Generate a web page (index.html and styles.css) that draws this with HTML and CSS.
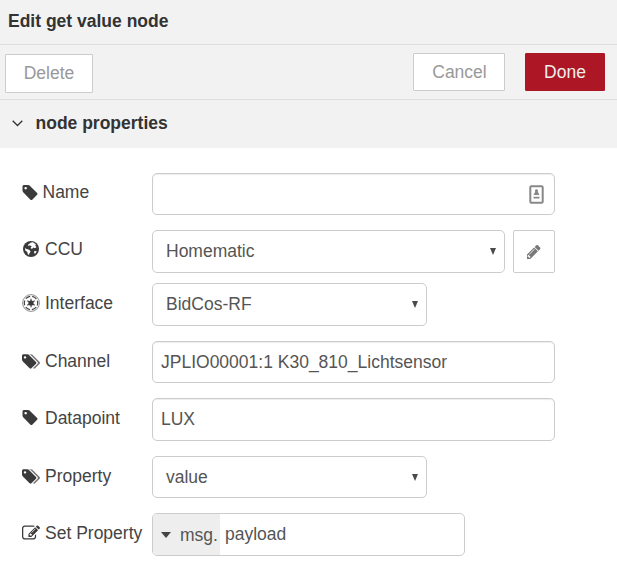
FILE: index.html
```html
<!DOCTYPE html>
<html lang="en">
<head>
<meta charset="utf-8">
<title>Edit get value node</title>
<link rel="stylesheet" href="styles.css">
</head>
<body>
<svg class="defs" width="0" height="0">
  <symbol id="tag" viewBox="128 128 1515 1515"><path d="M576 448q0-53-37.500-90.500t-90.500-37.500-90.500 37.500-37.500 90.500 37.500 90.500 90.500 37.500 90.500-37.500 37.500-90.500zm1067 576q0 53-37 90l-491 492q-39 37-91 37-53 0-90-37l-715-716q-38-37-64.500-101t-26.500-117v-416q0-52 38-90t90-38h416q53 0 117 26.500t102 64.500l715 714q37 39 37 91z"/></symbol>
  <symbol id="tags" viewBox="128 128 1899 1515"><path d="M576 448q0-53-37.500-90.500t-90.500-37.500-90.500 37.500-37.500 90.500 37.500 90.500 90.500 37.500 90.500-37.500 37.500-90.500zm1067 576q0 53-37 90l-491 492q-39 37-91 37-53 0-90-37l-715-716q-38-37-64.500-101t-26.500-117v-416q0-52 38-90t90-38h416q53 0 117 26.500t102 64.500l715 714q37 39 37 91z"/><path opacity=".7" d="M2027 1024q0 53-37 90l-491 492q-39 37-91 37-36 0-59-14t-53-45l470-470q37-37 37-90 0-52-37-91l-715-714q-38-38-102-64.500t-117-26.500h224q53 0 117 26.500t102 64.500l715 714q37 39 37 91z"/></symbol>
  <symbol id="pencil" viewBox="256 149 1387 1515"><path d="M491 1536l91-91-235-235-91 91v107h128v128h107zm523-928q0-22-22-22-10 0-17 7l-542 542q-7 7-7 17 0 22 22 22 10 0 17-7l542-542q7-7 7-17zm-54-192l416 416-832 832h-416v-416zm683 96q0 53-37 90l-166 166-416-416 166-165q36-38 90-38 53 0 91 38l235 234q37 39 37 91z"/></symbol>
  <symbol id="edit" viewBox="0 128 1792 1408"><path d="M888 1184l116-116-152-152-116 116v56h96v96h56zm440-720q-16-16-33 1l-350 350q-17 17-1 33t33-1l350-350q17-17 1-33zm80 594v190q0 119-84.500 203.500t-203.500 84.500h-832q-119 0-203.500-84.500t-84.500-203.500v-832q0-119 84.500-203.500t203.500-84.500h832q63 0 117 25 15 7 18 23 3 17-9 29l-49 49q-14 14-32 8-23-6-45-6h-832q-66 0-113 47t-47 113v832q0 66 47 113t113 47h832q66 0 113-47t47-113v-126q0-13 9-22l64-64q15-15 35-7t20 29zm-96-738l288 288-672 672h-288v-288zm444 132l-92 92-288-288 92-92q28-28 68-28t68 28l152 152q28 28 28 68t-28 68z"/></symbol>
  <symbol id="globe" viewBox="0 0 16 16"><circle cx="8" cy="8" r="8"/><path fill="#fff" d="M8 1.600 10 1.300 13 3.400 12.200 4.800 13.600 6 12 7.300 10.300 6.500 9 8 7.500 7 8.700 5.200 6.700 4.300 5.500 5.200 5 3.800ZM2 7 3.500 8 6.300 8.700 7.600 10.500 6.500 12.300 5.900 14 4.800 13.300 4.300 11 2.300 9.500ZM11 10.300 13.700 10 12.500 12.500 11.300 12.600Z"/></symbol>
  <symbol id="empire" viewBox="0 0 18 18"><g fill="none" stroke="#444"><circle cx="9" cy="9" r="8.400" stroke-width=".8" opacity=".75"/><circle cx="9" cy="9" r="6.700" stroke-width="1.200" stroke-dasharray="5 2.016" stroke-dashoffset="2.500"/><path stroke-width="1.200" d="M9 4.700v8.600M5.300 6.850l7.400 4.300M5.300 11.150l7.400-4.300"/></g><circle cx="9" cy="9" r="2.600"/></symbol>
</svg>
<header class="title">Edit get value node</header>
<div class="toolbar">
  <button class="btn delete">Delete</button>
  <button class="btn cancel">Cancel</button>
  <button class="btn done">Done</button>
</div>
<div class="section">
  <svg class="chevron" viewBox="0 0 11 7"><path d="M.7.8 5.500 5.500 10.300.8"/></svg>
  <span>node properties</span>
</div>
<main class="form">
  <div class="row short name-row">
    <label><svg class="icon tag"><use href="#tag"/></svg>Name</label>
    <div class="field wide input"><svg class="contact" viewBox="0 0 15 19"><rect x="1.300" y="1.300" width="12.400" height="16.400" rx="1"/><path d="M7.500 4.200a1.600 1.600 0 0 1 1.300 2.500L10.500 10h-6l1.700-3.300A1.600 1.600 0 0 1 7.500 4.200ZM4.500 11.700h6v1.800h-6Z"/></svg></div>
  </div>
  <div class="row ccu-row">
    <label><svg class="icon globe"><use href="#globe"/></svg>CCU</label>
    <div class="field ccu select"><span>Homematic</span><i class="arrow"></i></div>
    <button class="edit-btn"><svg class="pencil"><use href="#pencil"/></svg></button>
  </div>
  <div class="row tight">
    <label><svg class="icon empire"><use href="#empire"/></svg>Interface</label>
    <div class="field medium select"><span>BidCos-RF</span><i class="arrow"></i></div>
  </div>
  <div class="row short">
    <label><svg class="icon tags"><use href="#tags"/></svg>Channel</label>
    <div class="field wide input"><span class="channel">JPLIO00001:1 K30_810_Lichtsensor</span></div>
  </div>
  <div class="row">
    <label><svg class="icon tag"><use href="#tag"/></svg>Datapoint</label>
    <div class="field wide input">LUX</div>
  </div>
  <div class="row short">
    <label><svg class="icon tags"><use href="#tags"/></svg>Property</label>
    <div class="field medium select"><span>value</span><i class="arrow"></i></div>
  </div>
  <div class="row">
    <label><svg class="icon edit"><use href="#edit"/></svg>Set Property</label>
    <div class="field typed"><span class="type"><i class="caret"></i>msg.</span><span class="value">payload</span></div>
  </div>
</main>
</body>
</html>
```
FILE: styles.css
```css
* { box-sizing: border-box; }
body {
  margin: 0;
  background: #fff;
  color: #444;
  font: 17.5px/20px "Liberation Sans", Arial, sans-serif;
}
button { font: inherit; padding: 0; }
.defs { display: block; }
.title {
  height: 45px;
  padding: 11px 8px 0;
  background: #f2f2f2;
  border-bottom: 1px solid #ddd;
  color: #333;
  font-weight: bold;
}
.toolbar {
  display: flex;
  align-items: center;
  height: 55px;
  padding: 0 12px 0 5px;
  background: #f2f2f2;
  border-bottom: 1px solid #ddd;
}
.btn {
  height: 38px;
  border: 1px solid #ccc;
  border-radius: 1px;
  background: #fff;
  color: #999;
}
.delete { width: 88px; height: 39px; margin: 2px auto 0 0; }
.cancel { width: 92px; margin-right: 20px; padding-left: 1px; }
.done { width: 80px; border-color: #ad1625; background: #ad1625; color: #eee; }
.section {
  display: flex;
  align-items: center;
  height: 48px;
  padding: 0 0 2px 12px;
  gap: 12.5px;
  background: #f2f2f2;
  color: #333;
  font-weight: bold;
}
.chevron { width: 11px; height: 7px; fill: none; stroke: #333; stroke-width: 1.3; }
.form { display: flex; flex-direction: column; gap: 15px; padding: 25px 0 0 22px; }
.row { display: flex; height: 43px; }
.row.short { height: 42px; }
.row.tight { margin-top: -5px; }
label { display: flex; align-items: center; width: 130px; padding-bottom: 4px; white-space: nowrap; }
.short label { padding-bottom: 2px; }
.name-row label { padding-bottom: 4px; }
.ccu-row label { padding-bottom: 6px; }
.icon { flex: none; margin-right: 5px; fill: #3a3a3a; }
.tag { width: 16px; height: 15px; margin-right: 7px; }
.name-row .tag { margin-right: 4.5px; }
.tags { width: 18px; height: 15px; }
.globe { width: 16px; height: 16px; margin: 0 6px 0 1px; }
.empire { width: 18px; height: 18px; }
.edit { width: 18px; height: 15px; }
.field {
  display: flex;
  align-items: center;
  border: 1px solid #ccc;
  border-radius: 5px;
  background: #fff;
  color: #555;
}
.row:not(.short) .field { padding-bottom: 2px; }
.wide { width: 403px; }
.medium { width: 275px; }
.ccu { width: 353px; }
.input { padding: 0 10px 0 8px; box-shadow: inset 0 1px 1px rgba(0, 0, 0, .075); }
.select { justify-content: space-between; padding: 0 8px 0 13px; }
.arrow { border: solid transparent; border-width: 7px 3.5px 0; border-top-color: #4a4a4a; }
.row:not(.short) .arrow { margin-top: 2px; }
.contact { width: 15px; height: 19px; margin-left: auto; fill: #888; }
.contact rect { fill: none; stroke: #888; stroke-width: 2; }
.edit-btn {
  display: flex;
  align-items: center;
  justify-content: center;
  width: 42px;
  margin-left: 8px;
  border: 1px solid #ccc;
  border-radius: 2px;
  background: #fff;
}
.pencil { width: 14px; height: 14px; fill: #777; }
.row .field.typed { width: 313px; padding: 0; overflow: hidden; }
.type {
  display: flex;
  align-items: center;
  width: 67px;
  height: 41px;
  padding: 1px 0 0 8px;
  gap: 8px;
  background: #eee;
}
.caret { border: solid transparent; border-width: 6px 5.5px 0; border-top-color: #444; margin-right: 1px; }
.value { padding: 0 0 2px 5px; }
```
